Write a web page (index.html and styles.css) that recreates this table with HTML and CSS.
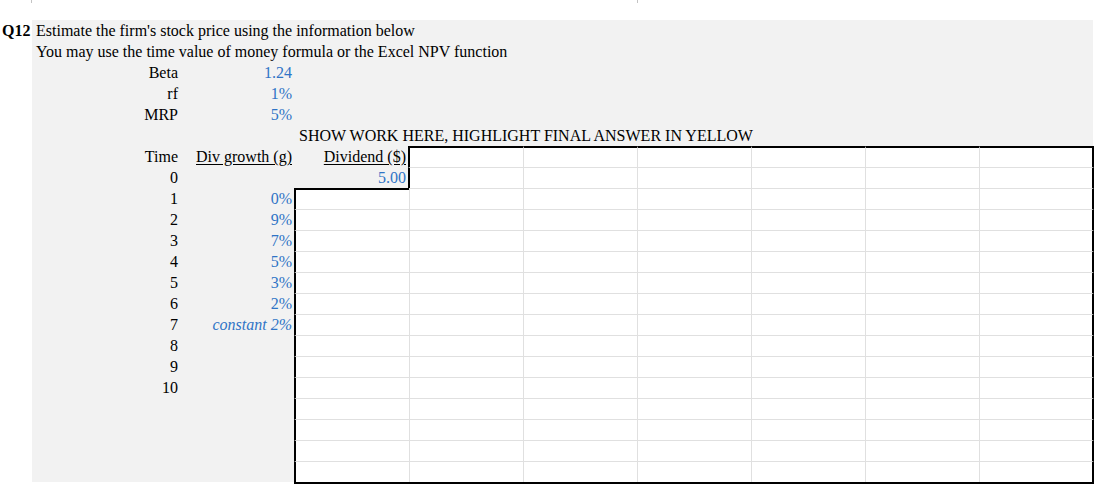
FILE: index.html
```html
<!DOCTYPE html>
<html>
<head>
<meta charset="utf-8">
<link rel="stylesheet" href="styles.css">
</head>
<body>
<div class="ticks"><span class="tick a"></span><span class="tick b"></span></div>
<div class="page">
  <div class="gutter"><div class="q12">Q12</div></div>
  <div class="sheet">
    <div class="cell wide">Estimate the firm's stock price using the information below</div>
    <div class="cell wide">You may use the time value of money formula or the Excel NPV function</div>

    <div class="cell r nl">Beta</div><div class="cell r blue">1.24</div>
    <div class="cell r nl">rf</div><div class="cell r blue">1%</div>
    <div class="cell r nl">MRP</div><div class="cell r blue">5%</div>

    <div class="cell gap2"></div><div class="cell banner">SHOW WORK HERE, HIGHLIGHT FINAL ANSWER IN YELLOW</div>

    <div class="cell r nl">Time</div><div class="cell r"><span class="u">Div growth (g)</span></div><div class="cell r"><span class="u">Dividend ($)</span></div>
    <div class="w bt bl"></div><div class="w bt"></div><div class="w bt"></div><div class="w bt"></div><div class="w bt"></div><div class="w bt br"></div>

    <div class="cell r nl">0</div><div class="cell"></div><div class="cell r blue">5.00</div>
    <div class="w bl"></div><div class="w"></div><div class="w"></div><div class="w"></div><div class="w"></div><div class="w br"></div>

    <div class="cell r nl">1</div><div class="cell r blue">0%</div>
    <div class="w bt bl"></div><div class="w"></div><div class="w"></div><div class="w"></div><div class="w"></div><div class="w"></div><div class="w br"></div>

    <div class="cell r nl">2</div><div class="cell r blue">9%</div>
    <div class="w bl"></div><div class="w"></div><div class="w"></div><div class="w"></div><div class="w"></div><div class="w"></div><div class="w br"></div>

    <div class="cell r nl">3</div><div class="cell r blue">7%</div>
    <div class="w bl"></div><div class="w"></div><div class="w"></div><div class="w"></div><div class="w"></div><div class="w"></div><div class="w br"></div>

    <div class="cell r nl">4</div><div class="cell r blue">5%</div>
    <div class="w bl"></div><div class="w"></div><div class="w"></div><div class="w"></div><div class="w"></div><div class="w"></div><div class="w br"></div>

    <div class="cell r nl">5</div><div class="cell r blue">3%</div>
    <div class="w bl"></div><div class="w"></div><div class="w"></div><div class="w"></div><div class="w"></div><div class="w"></div><div class="w br"></div>

    <div class="cell r nl">6</div><div class="cell r blue">2%</div>
    <div class="w bl"></div><div class="w"></div><div class="w"></div><div class="w"></div><div class="w"></div><div class="w"></div><div class="w br"></div>

    <div class="cell r nl">7</div><div class="cell r blue it">constant 2%</div>
    <div class="w bl"></div><div class="w"></div><div class="w"></div><div class="w"></div><div class="w"></div><div class="w"></div><div class="w br"></div>

    <div class="cell r nl">8</div>
    <div class="w bl c3"></div><div class="w"></div><div class="w"></div><div class="w"></div><div class="w"></div><div class="w"></div><div class="w br"></div>

    <div class="cell r nl">9</div>
    <div class="w bl c3"></div><div class="w"></div><div class="w"></div><div class="w"></div><div class="w"></div><div class="w"></div><div class="w br"></div>

    <div class="cell r nl">10</div>
    <div class="w bl c3"></div><div class="w"></div><div class="w"></div><div class="w"></div><div class="w"></div><div class="w"></div><div class="w br"></div>

    <div class="w bl c3"></div><div class="w"></div><div class="w"></div><div class="w"></div><div class="w"></div><div class="w"></div><div class="w br"></div>
    <div class="w bl c3"></div><div class="w"></div><div class="w"></div><div class="w"></div><div class="w"></div><div class="w"></div><div class="w br"></div>
    <div class="w bl c3"></div><div class="w"></div><div class="w"></div><div class="w"></div><div class="w"></div><div class="w"></div><div class="w br"></div>
    <div class="w bl c3 bb"></div><div class="w bb"></div><div class="w bb"></div><div class="w bb"></div><div class="w bb"></div><div class="w bb"></div><div class="w br bb"></div>
  </div>
</div>
</body>
</html>
```

FILE: styles.css
```css
* { box-sizing: border-box; }
body {
  margin: 0;
  background: #fff;
  font-family: "Liberation Serif", "Times New Roman", serif;
  font-size: 16px;
  color: #000;
}
.ticks {
  height: 20px;
  display: flex;
  align-items: flex-start;
}
.tick {
  width: 1px;
  height: 3px;
  background: #c4c4c4;
}
.tick.a { margin-left: 31px; }
.tick.b { margin-left: 605px; }
.page {
  display: flex;
  align-items: flex-start;
  padding-bottom: 6px;
}
.gutter { width: 32px; flex: none; }
.q12 {
  height: 21px;
  line-height: 20px;
  padding: 1px 0 0 2px;
  font-weight: bold;
}
.sheet {
  display: grid;
  grid-template-columns: 149px 114px 114px repeat(6, 114px);
  grid-auto-rows: 21px;
  background: #f2f2f2;
}
.cell {
  line-height: 20px;
  padding: 1px 4px 0 4px;
  white-space: nowrap;
}
.wide { grid-column: 1 / -1; }
.gap2 { grid-column: 1 / span 2; }
.banner { grid-column: 3 / -1; }
.nl { grid-column-start: 1; }
.c3 { grid-column-start: 3; }
.r { text-align: right; padding-right: 3px; }
.blue { color: #2f74c6; }
.it { font-style: italic; }
.u { text-decoration: underline; text-underline-offset: 2px; }
.w {
  background: #fff;
  border-left: 1px solid #e0e0e0;
  border-top: 1px solid #e0e0e0;
}
.bt { border-top: 2px solid #000; }
.bl { border-left: 2px solid #000; margin-left: -1px; }
.br { border-right: 2px solid #000; margin-right: -1px; }
.bb { box-shadow: 0 2px 0 #000; }
```
